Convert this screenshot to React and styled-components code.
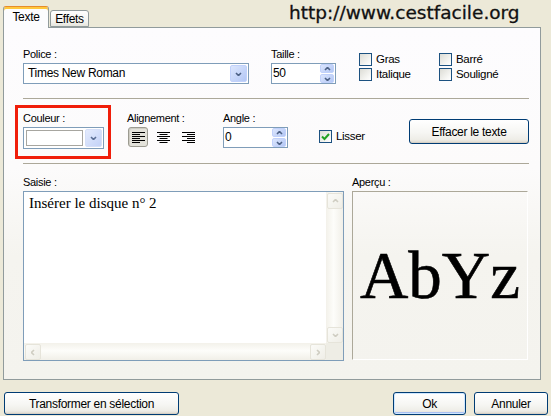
import React from "react";
import styled, { createGlobalStyle } from "styled-components";

const GlobalStyle = createGlobalStyle`
  html, body {
    margin: 0;
    padding: 0;
  }
  body {
    background: #ece9d8;
    font-family: "Liberation Sans", Arial, sans-serif;
    font-size: 11px;
    letter-spacing: -0.3px;
    color: #000;
  }
`;

const Window = styled.div`
  width: 551px;
  height: 416px;
  background: #ece9d8;
  display: flex;
  flex-direction: column;
  overflow: hidden;
`;

const Header = styled.div`
  display: flex;
  align-items: flex-end;
  height: 27px;
  padding-left: 3px;
`;

const Tab = styled.div`
  position: relative;
  box-sizing: border-box;
  width: ${(p) => p.$width}px;
  height: ${(p) => (p.$active ? 22 : 17)}px;
  margin-bottom: ${(p) => (p.$active ? -1 : 0)}px;
  margin-right: ${(p) => (p.$active ? 1 : 0)}px;
  z-index: ${(p) => (p.$active ? 1 : 0)};
  padding-top: ${(p) => (p.$active ? 4 : 2)}px;
  border: 1px solid #919b9c;
  border-bottom: ${(p) => (p.$active ? "none" : "1px solid #919b9c")};
  border-top-color: ${(p) => (p.$active ? "#e68b2c" : "#919b9c")};
  border-radius: 3px 3px 0 0;
  background: ${(p) =>
    p.$active ? "#fcfcfe" : "linear-gradient(#ffffff, #f3f3ef 70%, #e6e5dd)"};
  box-shadow: ${(p) => (p.$active ? "inset 0 2px 0 #ffc83c" : "none")};
  text-align: center;
  line-height: 13px;
  font-size: 12px;
`;

const Url = styled.div`
  align-self: flex-start;
  margin-top: 2px;
  margin-left: 200px;
  font-family: "DejaVu Sans", Verdana, sans-serif;
  font-size: 18.5px;
  line-height: 21px;
  letter-spacing: 0;
  color: #111;
  -webkit-text-stroke: 0.3px #111;
  white-space: nowrap;
`;

const Panel = styled.div`
  box-sizing: border-box;
  margin-left: 3px;
  width: 538px;
  height: 353px;
  border: 1px solid #919b9c;
  background: linear-gradient(#fdfcfe, #fcfbfb 40%, #f5f4ef 65%, #f4f3ee);
  padding: 20px 11px 0 19px;
  display: flex;
  flex-direction: column;
`;

const Row = styled.div`
  display: flex;
  align-items: flex-start;
  margin-top: ${(p) => p.$top || 0}px;
`;

const Separator = styled.div`
  height: 1px;
  background: #aca899;
  margin-top: ${(p) => p.$top}px;
`;

const Field = styled.div`
  display: flex;
  flex-direction: column;
  gap: 2px;
  width: ${(p) => (p.$width ? `${p.$width}px` : "auto")};
  margin-left: ${(p) => p.$left || 0}px;
  margin-top: ${(p) => p.$top || 0}px;
`;

const Label = styled.div`
  line-height: 13px;
  white-space: nowrap;
`;

const Combo = styled.div`
  box-sizing: border-box;
  width: ${(p) => p.$width}px;
  height: ${(p) => p.$height}px;
  border: 1px solid #7f9db9;
  background: #fff;
  padding: 1px;
  display: flex;
  align-items: stretch;
`;

const ComboText = styled.div`
  flex: 1;
  padding-left: 3px;
  line-height: 17px;
  font-size: 12px;
`;

const Swatch = styled.div`
  flex: 1;
  margin: 1px 2px 1px 1px;
  border: 1px solid #a7a6a0;
  background: #fff;
`;

const DropButton = styled.div`
  box-sizing: border-box;
  width: 17px;
  border: 1px solid ${(p) => (p.$pale ? "#d5dff8" : "#c1d1fb")};
  border-radius: 2px;
  background: ${(p) =>
    p.$pale
      ? "linear-gradient(135deg, #e4ebfd, #c3d2f7)"
      : "linear-gradient(135deg, #dce6fd, #b3c7f5)"};
  display: flex;
  align-items: center;
  justify-content: center;
`;

const Spin = styled.div`
  box-sizing: border-box;
  width: 65px;
  height: 21px;
  border: 1px solid #7f9db9;
  background: #fff;
  padding: 0 1px 0 0;
  display: flex;
`;

const SpinText = styled.div`
  flex: 1;
  padding-left: 1px;
  line-height: 19px;
  font-size: 12px;
`;

const SpinButtons = styled.div`
  width: 14px;
  display: flex;
  flex-direction: column;
  gap: 1px;
`;

const SpinButton = styled.div`
  box-sizing: border-box;
  flex: 1;
  border: 1px solid #c1d1fb;
  border-radius: 2px;
  background: linear-gradient(135deg, #dce6fd, #b3c7f5);
  display: flex;
  align-items: center;
  justify-content: center;
`;

const CheckGrid = styled.div`
  display: grid;
  grid-template-columns: 80px auto;
  row-gap: 2px;
  margin-left: ${(p) => p.$left}px;
  margin-top: ${(p) => p.$top}px;
`;

const Check = styled.label`
  display: flex;
  align-items: center;
  gap: 4px;
  line-height: 13px;
  font-size: 11.5px;
  margin-left: ${(p) => p.$left || 0}px;
  margin-top: ${(p) => p.$top || 0}px;
  white-space: nowrap;
`;

const Box = styled.span`
  box-sizing: border-box;
  width: 13px;
  height: 13px;
  border: 1px solid #1c5180;
  background: linear-gradient(135deg, #dcdcd5, #f6f6f3 70%, #fff);
  display: flex;
  align-items: center;
  justify-content: center;
`;

const RedBox = styled.div`
  box-sizing: border-box;
  width: 96px;
  height: 54px;
  margin-left: -8px;
  border: 3px solid #f01e0a;
  padding: 4px 0 0 5px;
`;

const AlignGroup = styled.div`
  display: flex;
  gap: 5px;
  padding-left: 1px;
`;

const AlignButton = styled.div`
  box-sizing: border-box;
  width: 20px;
  height: 20px;
  border-radius: 3px;
  border: 1px solid ${(p) => (p.$pressed ? "#9c9b91" : "transparent")};
  background: ${(p) => (p.$pressed ? "#e3e2da" : "transparent")};
  box-shadow: ${(p) => (p.$pressed ? "inset 1px 1px 0 #cfcdc3" : "none")};
  display: flex;
  align-items: center;
  justify-content: center;
`;

const Button = styled.button`
  box-sizing: border-box;
  width: ${(p) => p.$width}px;
  height: ${(p) => p.$height || 23}px;
  margin-left: ${(p) => p.$left || "0"};
  margin-top: ${(p) => p.$top || 0}px;
  padding: 0;
  border: 1px solid #003c74;
  border-radius: 3px;
  background: linear-gradient(#ffffff, #f6f6f3 55%, #eeede7 85%, #dcd7cc);
  box-shadow: ${(p) =>
    p.$default
      ? "inset 0 0 0 1px #cee7ff, inset 0 -2px 0 0 #a9c0f2"
      : "inset 0 -1px 0 #d6d0c5"};
  font-family: inherit;
  font-size: 12px;
  letter-spacing: -0.3px;
  color: #000;
`;

const TextBox = styled.div`
  box-sizing: border-box;
  width: 321px;
  height: 170px;
  border: 1px solid #7f9db9;
  background: #fff;
  display: grid;
  grid-template-columns: 1fr 17px;
  grid-template-rows: 1fr 17px;
`;

const TextContent = styled.div`
  padding: 3px 5px;
  font-family: "Liberation Serif", "Times New Roman", serif;
  font-size: 15px;
  letter-spacing: 0;
`;

const ScrollBar = styled.div`
  display: flex;
  flex-direction: ${(p) => (p.$vertical ? "column" : "row")};
  justify-content: space-between;
  background: ${(p) =>
    p.$vertical
      ? "linear-gradient(90deg, #f3f1ea, #fdfdfa 45%, #f1efe8)"
      : "linear-gradient(#f3f1ea, #fdfdfa 45%, #f1efe8)"};
  padding: 1px 0 0 1px;
`;

const ScrollArrow = styled.div`
  box-sizing: border-box;
  width: 16px;
  height: 16px;
  border: 1px solid #e6e4da;
  border-radius: 2px;
  background: linear-gradient(135deg, #fbfbf8, #efeee7);
  display: flex;
  align-items: center;
  justify-content: center;
`;

const ScrollCorner = styled.div`
  background: #eeede5;
`;

const Preview = styled.div`
  box-sizing: border-box;
  width: 176px;
  height: 169px;
  border: 1px solid;
  border-color: #aca899 #ffffff #ffffff #aca899;
  display: flex;
  align-items: center;
  justify-content: center;
  font-family: "Liberation Serif", "Times New Roman", serif;
  font-size: 67px;
  letter-spacing: 0;
  color: #000;
  -webkit-text-stroke: 0.6px #000;
`;

const Footer = styled.div`
  display: flex;
  align-items: center;
  gap: 8px;
  margin-top: 12px;
  padding: 0 3px 0 4px;
`;

const Chevron = ({ dir = "down", color = "#4d6185", w = 7, h = 4 }) => {
  const paths = {
    down: `M1 1 L${w / 2} ${h - 0.5} L${w - 1} 1`,
    up: `M1 ${h - 1} L${w / 2} 0.5 L${w - 1} ${h - 1}`,
    left: `M${h - 1} 1 L0.5 ${w / 2} L${h - 1} ${w - 1}`,
    right: `M1 1 L${h - 0.5} ${w / 2} L1 ${w - 1}`,
  };
  const vertical = dir === "up" || dir === "down";
  return (
    <svg width={vertical ? w : h} height={vertical ? h : w}>
      <path d={paths[dir]} fill="none" stroke={color} strokeWidth="1.6" />
    </svg>
  );
};

const AlignIcon = ({ mode }) => {
  const lines = [0, 1, 2, 3, 4, 5].map((i) => {
    const long = i % 2 === 0;
    const len = long ? 13 : 8;
    let x = 0;
    if (!long && mode === "center") x = 2.5;
    if (!long && mode === "right") x = 5;
    return <rect key={i} x={x} y={i * 2} width={len} height="1" fill="#000" />;
  });
  return (
    <svg width="13" height="11">
      {lines}
    </svg>
  );
};

const CheckMark = () => (
  <svg width="9" height="9">
    <path d="M1 4.5 L3.5 7 L8 2" fill="none" stroke="#21a121" strokeWidth="2" />
  </svg>
);

export default function App() {
  return (
    <Window>
      <GlobalStyle />
      <Header>
        <Tab $active $width={46}>Texte</Tab>
        <Tab $width={39}>Effets</Tab>
        <Url>http://www.cestfacile.org</Url>
      </Header>

      <Panel>
        <Row>
          <Field>
            <Label>Police :</Label>
            <Combo $width={226} $height={21}>
              <ComboText>Times New Roman</ComboText>
              <DropButton>
                <Chevron />
              </DropButton>
            </Combo>
          </Field>
          <Field $left={22}>
            <Label>Taille :</Label>
            <Spin>
              <SpinText>50</SpinText>
              <SpinButtons>
                <SpinButton>
                  <Chevron dir="up" />
                </SpinButton>
                <SpinButton>
                  <Chevron dir="down" />
                </SpinButton>
              </SpinButtons>
            </Spin>
          </Field>
          <CheckGrid $left={23} $top={5}>
            <Check>
              <Box />
              Gras
            </Check>
            <Check>
              <Box />
              Barré
            </Check>
            <Check>
              <Box />
              Italique
            </Check>
            <Check>
              <Box />
              Souligné
            </Check>
          </CheckGrid>
        </Row>

        <Separator $top={14} />

        <Row $top={6}>
          <RedBox>
            <Field>
              <Label>Couleur :</Label>
              <Combo $width={81} $height={22}>
                <Swatch />
                <DropButton $pale>
                  <Chevron color="#5a6e94" />
                </DropButton>
              </Combo>
            </Field>
          </RedBox>
          <Field $left={16} $top={7} $width={96}>
            <Label>Alignement :</Label>
            <AlignGroup>
              <AlignButton $pressed>
                <AlignIcon mode="left" />
              </AlignButton>
              <AlignButton>
                <AlignIcon mode="center" />
              </AlignButton>
              <AlignButton>
                <AlignIcon mode="right" />
              </AlignButton>
            </AlignGroup>
          </Field>
          <Field $top={7}>
            <Label>Angle :</Label>
            <Spin>
              <SpinText>0</SpinText>
              <SpinButtons>
                <SpinButton>
                  <Chevron dir="up" />
                </SpinButton>
                <SpinButton>
                  <Chevron dir="down" />
                </SpinButton>
              </SpinButtons>
            </Spin>
          </Field>
          <Check $left={31} $top={25}>
            <Box>
              <CheckMark />
            </Box>
            Lisser
          </Check>
          <Button $width={120} $height={25} $left="auto" $top={14}>
            Effacer le texte
          </Button>
        </Row>

        <Separator $top={4} />

        <Row $top={12}>
          <Field>
            <Label>Saisie :</Label>
            <TextBox>
              <TextContent>Insérer le disque n° 2</TextContent>
              <ScrollBar $vertical>
                <ScrollArrow>
                  <Chevron dir="up" color="#cfcdc2" />
                </ScrollArrow>
                <ScrollArrow>
                  <Chevron dir="down" color="#cfcdc2" />
                </ScrollArrow>
              </ScrollBar>
              <ScrollBar>
                <ScrollArrow>
                  <Chevron dir="left" color="#cfcdc2" />
                </ScrollArrow>
                <ScrollArrow>
                  <Chevron dir="right" color="#cfcdc2" />
                </ScrollArrow>
              </ScrollBar>
              <ScrollCorner />
            </TextBox>
          </Field>
          <Field $left={8}>
            <Label>Aperçu :</Label>
            <Preview>AbYz</Preview>
          </Field>
        </Row>
      </Panel>

      <Footer>
        <Button $width={175}>Transformer en sélection</Button>
        <Button $width={73} $left="auto" $default>
          Ok
        </Button>
        <Button $width={74}>Annuler</Button>
      </Footer>
    </Window>
  );
}
